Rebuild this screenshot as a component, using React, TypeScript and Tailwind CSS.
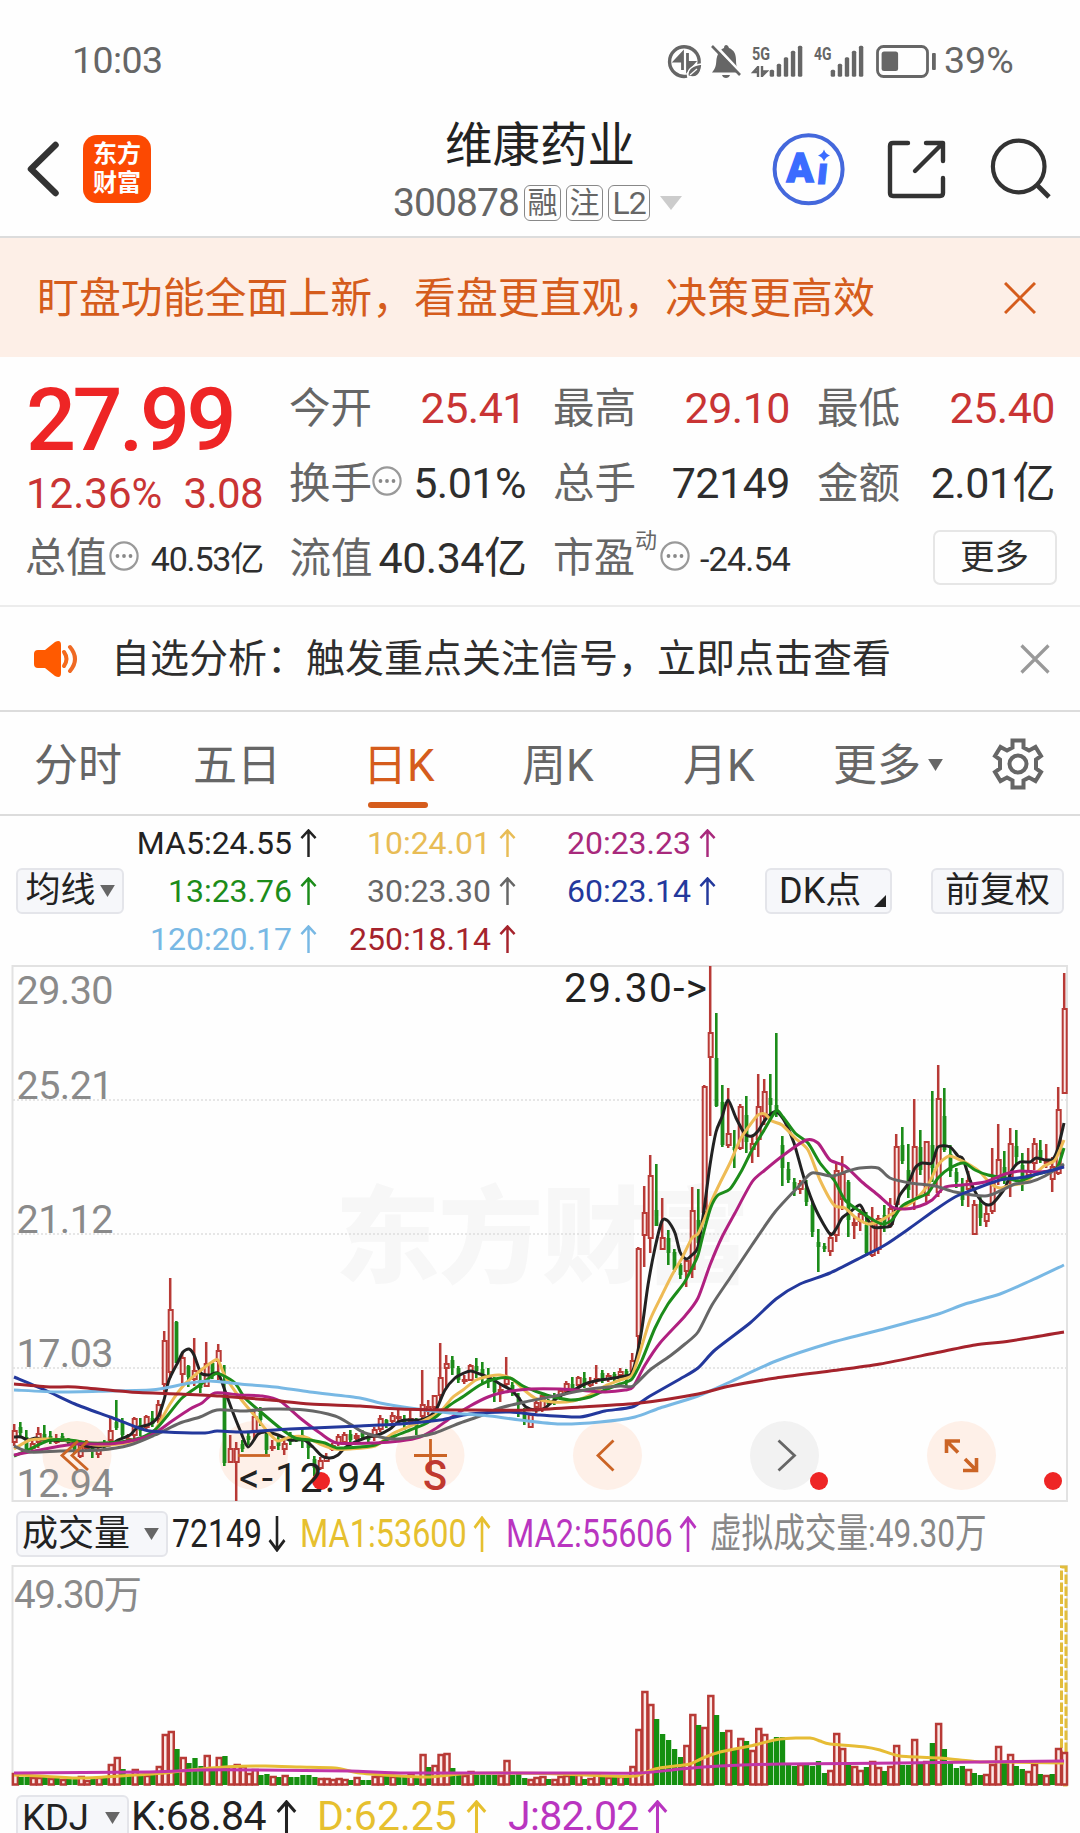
import React from "react";

type Point = [number, number];
// colour, high, body top, body bottom, low
type Candle = ["r" | "g", number, number, number, number];

const RED = "#b83a36";
const GREEN = "#1c8c1a";

const candles: Candle[] = [
  ["r", 1424, 1430, 1443, 1446], ["g", 1422, 1427, 1433, 1437], ["g", 1430, 1437, 1449, 1452], ["r", 1438, 1443, 1449, 1452],
  ["r", 1427, 1433, 1443, 1448], ["g", 1425, 1434, 1438, 1441], ["g", 1431, 1436, 1441, 1444], ["r", 1434, 1439, 1443, 1444],
  ["g", 1433, 1436, 1440, 1442], ["g", 1438, 1440, 1443, 1446], ["g", 1440, 1442, 1449, 1453], ["r", 1440, 1443, 1457, 1458],
  ["r", 1440, 1443, 1449, 1452], ["g", 1442, 1444, 1450, 1458], ["r", 1444, 1449, 1455, 1458], ["g", 1440, 1443, 1446, 1449],
  ["r", 1418, 1430, 1441, 1444], ["g", 1400, 1422, 1428, 1430], ["g", 1418, 1422, 1435, 1438], ["r", 1434, 1438, 1442, 1445],
  ["r", 1417, 1418, 1436, 1440], ["g", 1418, 1425, 1431, 1436], ["r", 1415, 1416, 1428, 1430], ["g", 1411, 1418, 1424, 1427],
  ["r", 1400, 1404, 1420, 1423], ["r", 1331, 1340, 1385, 1392], ["r", 1278, 1309, 1373, 1378], ["g", 1321, 1322, 1363, 1363],
  ["r", 1352, 1357, 1375, 1385], ["g", 1365, 1366, 1377, 1387], ["r", 1338, 1370, 1380, 1386], ["g", 1370, 1380, 1388, 1393],
  ["r", 1342, 1363, 1387, 1387], ["g", 1362, 1363, 1375, 1379], ["r", 1344, 1350, 1362, 1380], ["g", 1365, 1397, 1463, 1466],
  ["r", 1435, 1448, 1463, 1463], ["r", 1442, 1448, 1463, 1501], ["g", 1440, 1444, 1449, 1452], ["g", 1432, 1436, 1440, 1445],
  ["r", 1410, 1416, 1433, 1440], ["g", 1407, 1413, 1420, 1426], ["g", 1432, 1434, 1450, 1454], ["r", 1440, 1446, 1449, 1451],
  ["g", 1436, 1440, 1446, 1450], ["r", 1437, 1443, 1450, 1455], ["g", 1432, 1435, 1442, 1445], ["g", 1435, 1437, 1441, 1442],
  ["g", 1428, 1435, 1439, 1448], ["g", 1437, 1440, 1448, 1459], ["g", 1456, 1459, 1468, 1476], ["r", 1457, 1460, 1469, 1470],
  ["r", 1453, 1457, 1462, 1462], ["r", 1443, 1445, 1450, 1451], ["r", 1434, 1436, 1444, 1446], ["r", 1432, 1434, 1443, 1444],
  ["g", 1430, 1434, 1440, 1443], ["r", 1433, 1435, 1439, 1440], ["g", 1430, 1433, 1437, 1440], ["g", 1434, 1436, 1440, 1442],
  ["r", 1427, 1429, 1438, 1441], ["r", 1415, 1418, 1430, 1432], ["g", 1419, 1420, 1426, 1428], ["r", 1412, 1415, 1422, 1424],
  ["r", 1408, 1416, 1419, 1422], ["g", 1415, 1419, 1424, 1430], ["r", 1409, 1418, 1422, 1427], ["g", 1418, 1420, 1428, 1435],
  ["r", 1370, 1404, 1417, 1420], ["r", 1400, 1406, 1412, 1415], ["r", 1395, 1395, 1408, 1410], ["r", 1343, 1377, 1396, 1400],
  ["r", 1355, 1363, 1369, 1387], ["g", 1356, 1360, 1368, 1375], ["g", 1366, 1368, 1380, 1383], ["r", 1375, 1379, 1381, 1384],
  ["r", 1364, 1365, 1381, 1381], ["g", 1358, 1366, 1371, 1378], ["g", 1362, 1369, 1376, 1384], ["g", 1368, 1376, 1382, 1388],
  ["g", 1377, 1381, 1392, 1402], ["r", 1385, 1389, 1393, 1402], ["r", 1357, 1378, 1385, 1388], ["g", 1382, 1385, 1393, 1396],
  ["g", 1393, 1397, 1405, 1417], ["g", 1408, 1412, 1420, 1425], ["r", 1413, 1414, 1428, 1428], ["r", 1399, 1402, 1408, 1413],
  ["r", 1393, 1395, 1410, 1412], ["g", 1399, 1400, 1404, 1406], ["g", 1393, 1397, 1402, 1405], ["r", 1388, 1390, 1396, 1400],
  ["r", 1381, 1383, 1392, 1394], ["g", 1377, 1384, 1390, 1393], ["r", 1376, 1377, 1386, 1390], ["g", 1372, 1378, 1385, 1388],
  ["r", 1377, 1381, 1386, 1387], ["r", 1365, 1378, 1381, 1384], ["g", 1370, 1373, 1381, 1383], ["r", 1373, 1375, 1380, 1382],
  ["g", 1372, 1374, 1379, 1381], ["r", 1368, 1371, 1376, 1378], ["g", 1369, 1371, 1376, 1386], ["r", 1353, 1360, 1372, 1376],
  ["r", 1247, 1248, 1337, 1355], ["r", 1186, 1212, 1236, 1267], ["r", 1155, 1175, 1239, 1253], ["g", 1164, 1210, 1226, 1226],
  ["r", 1198, 1237, 1250, 1250], ["g", 1230, 1238, 1253, 1265], ["g", 1249, 1252, 1270, 1272], ["g", 1263, 1265, 1275, 1279],
  ["r", 1258, 1260, 1272, 1287], ["r", 1187, 1210, 1270, 1278], ["g", 1189, 1220, 1243, 1250], ["r", 1085, 1086, 1213, 1215],
  ["r", 966, 1032, 1058, 1136], ["g", 1013, 1058, 1106, 1107], ["g", 1085, 1102, 1145, 1147], ["r", 1088, 1133, 1146, 1148],
  ["g", 1130, 1147, 1150, 1168], ["r", 1104, 1106, 1149, 1150], ["g", 1096, 1115, 1142, 1153], ["r", 1137, 1143, 1150, 1163],
  ["r", 1074, 1106, 1140, 1157], ["r", 1079, 1091, 1117, 1125], ["g", 1074, 1098, 1105, 1117], ["g", 1033, 1105, 1112, 1117],
  ["g", 1136, 1145, 1168, 1186], ["g", 1162, 1169, 1180, 1183], ["g", 1178, 1182, 1190, 1196], ["r", 1180, 1183, 1190, 1194],
  ["g", 1180, 1188, 1202, 1206], ["g", 1202, 1205, 1232, 1237], ["g", 1229, 1242, 1247, 1272], ["g", 1243, 1246, 1249, 1252],
  ["r", 1232, 1237, 1252, 1256], ["r", 1164, 1170, 1236, 1242], ["r", 1156, 1173, 1200, 1210], ["g", 1180, 1182, 1220, 1237],
  ["r", 1216, 1222, 1226, 1239], ["r", 1209, 1213, 1222, 1231], ["g", 1212, 1225, 1253, 1256], ["r", 1207, 1222, 1256, 1257],
  ["r", 1215, 1218, 1250, 1254], ["g", 1205, 1215, 1225, 1232], ["r", 1198, 1208, 1225, 1228], ["r", 1134, 1146, 1205, 1210],
  ["g", 1127, 1145, 1161, 1164], ["g", 1144, 1170, 1190, 1198], ["r", 1099, 1146, 1200, 1210], ["g", 1130, 1147, 1170, 1175],
  ["r", 1141, 1141, 1196, 1202], ["g", 1091, 1145, 1168, 1182], ["r", 1065, 1098, 1193, 1197], ["g", 1088, 1116, 1150, 1152],
  ["g", 1145, 1154, 1171, 1177], ["g", 1168, 1172, 1182, 1188], ["g", 1178, 1186, 1200, 1206], ["r", 1171, 1180, 1190, 1207],
  ["r", 1200, 1204, 1235, 1235], ["g", 1196, 1204, 1218, 1226], ["r", 1204, 1213, 1222, 1227], ["r", 1148, 1183, 1212, 1214],
  ["r", 1124, 1159, 1178, 1185], ["g", 1151, 1167, 1178, 1184], ["r", 1128, 1143, 1178, 1197], ["g", 1130, 1146, 1157, 1165],
  ["g", 1153, 1165, 1180, 1191], ["r", 1148, 1170, 1176, 1180], ["r", 1138, 1143, 1164, 1170], ["g", 1140, 1150, 1160, 1163],
  ["r", 1144, 1160, 1164, 1168], ["r", 1157, 1166, 1180, 1192], ["r", 1087, 1109, 1174, 1175], ["r", 973, 1008, 1094, 1094],
];

const volumes =
  "r12 g8 g8 r8 r8 g8 r7 g8 r6 g8 g7 r9 r5 g7 r8 g8 r21 r28 g16 g10 r16 g11 r10 g12 r19 r51 r54 g36 r28 g22 g27 g19 r30 g17 r28 g29 r19 r21 r19 r12 r16 g10 g11 r9 g8 r10 g8 g8 g10 g10 g8 r7 r7 r6 r7 r6 g5 r8 g5 g5 r9 r10 g9 r9 g9 g8 r12 g8 r31 g18 r20 r31 r32 g17 g12 r10 r14 g10 g10 g10 g10 r10 r25 g10 g11 g7 r6 r8 r9 g6 r6 r9 r10 g10 r11 g6 r7 r11 g8 r8 g9 r9 g9 r19 r56 r94 r81 g66 g51 g45 g36 g28 r40 r71 g60 r58 r90 g70 g53 r55 g37 r47 g44 r35 r57 r51 g45 g48 g48 g20 g19 r21 g20 g19 g24 g12 r15 r52 r37 g21 r19 r15 g18 r24 r18 g14 r19 r40 g20 g20 r46 g22 r24 g42 r62 g36 g22 g17 g19 r16 g12 g10 r11 r21 r39 g22 r31 g19 g16 r14 r21 g11 r10 g11 r37 r33".split(" ");

const averages: { color: string; points: Point[] }[] = [
  {
    color: "#222222",
    points: [[14,1437],[21,1437],[28,1440],[36,1438],[45,1440],[70,1441],[90,1447],[110,1445],[118,1440],[130,1435],[137,1428],[150,1424],[158,1417],[164,1400],[169,1380],[178,1362],[183,1352],[189,1349],[194,1355],[201,1373],[210,1375],[218,1373],[224,1388],[232,1410],[240,1430],[248,1447],[258,1434],[266,1432],[278,1435],[290,1440],[304,1440],[313,1447],[322,1456],[330,1458],[338,1455],[346,1447],[365,1438],[378,1435],[390,1429],[398,1422],[405,1420],[420,1420],[430,1416],[437,1408],[445,1390],[455,1378],[464,1373],[471,1371],[480,1374],[490,1378],[500,1384],[511,1390],[518,1397],[526,1407],[536,1410],[545,1408],[552,1402],[562,1395],[572,1391],[585,1384],[600,1380],[614,1378],[625,1376],[631,1374],[636,1360],[642,1328],[648,1285],[655,1248],[662,1221],[668,1221],[675,1233],[680,1252],[686,1259],[692,1255],[698,1247],[704,1210],[710,1165],[716,1132],[722,1117],[728,1100],[736,1118],[745,1134],[752,1136],[758,1131],[765,1120],[772,1113],[777,1112],[785,1122],[794,1143],[804,1178],[816,1210],[830,1234],[836,1229],[842,1218],[850,1212],[860,1205],[866,1216],[873,1227],[885,1227],[892,1224],[899,1197],[908,1184],[915,1168],[922,1163],[932,1163],[938,1147],[950,1147],[958,1156],[963,1159],[970,1180],[977,1195],[985,1204],[992,1204],[1000,1195],[1006,1186],[1012,1170],[1020,1162],[1030,1162],[1036,1158],[1046,1160],[1053,1159],[1058,1148],[1064,1123]],
  },
  {
    color: "#eebb55",
    points: [[14,1449],[30,1440],[48,1439],[75,1441],[95,1445],[120,1444],[140,1439],[155,1430],[170,1404],[184,1385],[200,1371],[212,1362],[218,1360],[225,1376],[240,1398],[255,1416],[268,1432],[278,1441],[290,1437],[305,1437],[320,1444],[335,1449],[350,1449],[375,1446],[392,1434],[410,1426],[425,1420],[440,1412],[452,1398],[463,1390],[476,1380],[490,1376],[500,1375],[512,1379],[523,1389],[535,1398],[552,1402],[573,1401],[590,1395],[605,1386],[620,1380],[632,1375],[640,1352],[650,1320],[662,1295],[672,1275],[682,1258],[692,1238],[698,1234],[704,1220],[712,1200],[720,1183],[730,1163],[740,1140],[750,1125],[758,1115],[765,1114],[772,1121],[782,1125],[795,1138],[808,1150],[820,1180],[834,1205],[845,1208],[855,1217],[868,1224],[880,1221],[890,1215],[903,1208],[915,1200],[928,1185],[938,1165],[949,1156],[960,1160],[970,1165],[980,1172],[990,1183],[1000,1188],[1012,1185],[1024,1183],[1036,1173],[1044,1166],[1055,1160],[1064,1140]],
  },
  {
    color: "#1c8c1a",
    points: [[14,1456],[30,1449],[50,1440],[70,1440],[90,1443],[120,1442],[140,1438],[155,1430],[168,1415],[182,1398],[200,1385],[215,1374],[222,1375],[235,1383],[245,1398],[262,1413],[280,1428],[295,1438],[310,1440],[325,1443],[337,1448],[360,1447],[375,1445],[395,1436],[410,1430],[425,1424],[437,1416],[450,1405],[464,1396],[480,1385],[495,1379],[510,1378],[523,1386],[535,1391],[550,1396],[570,1400],[590,1397],[605,1390],[620,1384],[632,1379],[642,1360],[655,1328],[668,1304],[684,1283],[692,1268],[698,1255],[704,1231],[711,1207],[718,1195],[730,1189],[742,1170],[752,1150],[763,1132],[776,1111],[783,1117],[795,1133],[808,1143],[820,1163],[834,1180],[845,1200],[858,1210],[870,1218],[882,1224],[892,1220],[902,1206],[915,1199],[928,1193],[938,1178],[950,1168],[964,1163],[975,1170],[988,1175],[1005,1178],[1020,1181],[1032,1176],[1045,1172],[1057,1168],[1064,1148]],
  },
  {
    color: "#b02080",
    points: [[14,1455],[45,1449],[75,1444],[110,1444],[135,1440],[155,1433],[172,1421],[190,1409],[202,1403],[215,1393],[240,1395],[262,1396],[280,1401],[300,1418],[320,1433],[337,1443],[375,1443],[400,1441],[420,1437],[435,1429],[452,1417],[470,1406],[488,1397],[505,1392],[530,1389],[560,1389],[590,1391],[605,1392],[625,1390],[633,1387],[645,1365],[660,1343],[685,1316],[698,1298],[710,1265],[722,1237],[735,1213],[752,1182],[765,1170],[785,1154],[806,1140],[818,1143],[830,1160],[845,1166],[862,1182],[878,1195],[892,1207],[905,1209],[920,1206],[932,1200],[945,1187],[962,1185],[985,1182],[1005,1174],[1020,1171],[1040,1172],[1055,1170],[1064,1166]],
  },
  {
    color: "#666666",
    points: [[14,1446],[30,1452],[60,1451],[100,1450],[130,1445],[155,1435],[180,1423],[200,1417],[217,1410],[245,1411],[270,1409],[305,1410],[335,1416],[350,1424],[365,1433],[392,1439],[415,1437],[435,1433],[460,1423],[480,1416],[500,1408],[525,1402],[560,1395],[590,1389],[620,1386],[633,1386],[650,1370],[670,1356],[685,1344],[698,1332],[712,1305],[730,1278],[752,1245],[775,1212],[800,1185],[812,1173],[832,1176],[848,1171],[860,1168],[878,1168],[890,1178],[910,1183],[935,1186],[955,1192],[985,1196],[1000,1191],[1015,1184],[1030,1182],[1045,1176],[1064,1164]],
  },
  {
    color: "#23389c",
    points: [[14,1377],[45,1390],[75,1404],[110,1417],[145,1430],[165,1432],[205,1433],[217,1431],[245,1432],[290,1429],[360,1426],[400,1424],[440,1420],[470,1414],[510,1412],[540,1415],[580,1417],[605,1411],[632,1407],[650,1396],[680,1379],[698,1368],[715,1350],[750,1323],[776,1299],[800,1284],[830,1273],[860,1258],[885,1245],[910,1228],[935,1210],[955,1197],[975,1189],[1000,1180],[1025,1177],[1064,1167]],
  },
  {
    color: "#78b8e4",
    points: [[14,1390],[60,1392],[110,1391],[150,1390],[165,1388],[190,1383],[210,1381],[240,1384],[275,1387],[310,1392],[360,1398],[380,1403],[410,1408],[450,1413],[490,1416],[520,1420],[560,1424],[600,1422],[635,1417],[660,1408],[698,1396],[730,1382],[776,1361],[830,1343],[880,1330],[935,1315],[965,1304],[1000,1294],[1030,1281],[1064,1265]],
  },
  {
    color: "#a5232c",
    points: [[14,1384],[50,1387],[75,1387],[130,1392],[180,1394],[220,1396],[270,1400],[310,1404],[360,1406],[400,1409],[470,1410],[530,1410],[580,1407],[640,1403],[698,1394],[730,1386],[776,1378],[830,1371],[880,1364],[935,1353],[975,1345],[1010,1341],[1064,1332]],
  },
];

const volumeAverages: { color: string; points: Point[] }[] = [
  {
    color: "#e6bc35",
    points: [[14,1775],[40,1776],[80,1778],[120,1776],[165,1773],[190,1770],[225,1767],[265,1766],[300,1767],[335,1768],[360,1773],[400,1776],[430,1777],[460,1774],[500,1773],[560,1774],[610,1776],[635,1776],[655,1769],[675,1766],[690,1764],[703,1758],[720,1752],[750,1746],[780,1739],[810,1738],[820,1741],[830,1744],[865,1747],[880,1750],[900,1756],[940,1758],[960,1760],[980,1762],[1000,1762],[1064,1763]],
  },
  {
    color: "#c135a8",
    points: [[14,1773],[150,1772],[200,1770],[260,1770],[350,1771],[400,1773],[560,1773],[640,1773],[680,1769],[720,1766],[780,1764],[900,1763],[1064,1761]],
  },
];

// Catmull-Rom through the points
const smooth = (p: Point[]) => {
  let d = `M${p[0][0]} ${p[0][1]}`;
  for (let i = 0; i < p.length - 1; i++) {
    const a = p[Math.max(i - 1, 0)];
    const b = p[i];
    const c = p[i + 1];
    const e = p[Math.min(i + 2, p.length - 1)];
    d += `C${b[0] + (c[0] - a[0]) / 8} ${b[1] + (c[1] - a[1]) / 8} ${c[0] - (e[0] - b[0]) / 8} ${c[1] - (e[1] - b[1]) / 8} ${c[0]} ${c[1]}`;
  }
  return d;
};

const Arrow = ({ down = false, className = "w-[18px] h-[29px]" }: { down?: boolean; className?: string }) => (
  <svg viewBox="0 0 18 29" preserveAspectRatio="none" className={className} fill="none" stroke="currentColor" strokeWidth="2.6">
    <path d={down ? "M9 0V28M1.5 19.5L9 27.5L16.5 19.5" : "M9 29V1.5M1.5 9.5L9 1.5L16.5 9.5"} />
  </svg>
);

const Triangle = ({ className = "text-[#666]" }: { className?: string }) => (
  <svg viewBox="0 0 16 13" className={`w-[15px] h-[12px] ${className}`}>
    <path d="M0 0H16L8 13Z" fill="currentColor" />
  </svg>
);

const Dots = () => (
  <svg viewBox="0 0 30 30" className="w-[30px] h-[30px] shrink-0 -mt-[6px]">
    <circle cx="15" cy="15" r="13.6" fill="none" stroke="#999" strokeWidth="2.2" />
    <circle cx="8.5" cy="15" r="1.9" fill="#888" />
    <circle cx="15" cy="15" r="1.9" fill="#888" />
    <circle cx="21.5" cy="15" r="1.9" fill="#888" />
  </svg>
);

const StatusBar = () => {
  const bars = [7, 13, 19.5, 26, 31];
  return (
    <div className="flex items-center h-[122px] pl-[72px] text-[#666]">
      <span className="text-[37.5px] tracking-[-0.6px] w-[592px]">10:03</span>
      <svg viewBox="664 39 277 44" className="w-[277px] h-[44px]" fill="none">
        <path d="M698.5 66A14.8 14.8 0 1 0 687 76.200" stroke="#666" strokeWidth="3.400" />
        <path d="M682.500 70V53L675 61H682.500" stroke="#666" strokeWidth="2.800" fill="#666" />
        <path d="M687.500 53V70L694 62.500H687.500" stroke="#666" strokeWidth="2.800" fill="#666" />
        <path d="M702 64C693 65 687 69 688 76C696 79 701 75 702 64Z" fill="#666" stroke="#fff" strokeWidth="1.400" />
        <path d="M690 75L697 69" stroke="#fff" strokeWidth="1.200" />
        <path d="M712 72.500C716 68 716 65 716.500 59C718 52 721 49 724 48C724 44 728 44 729 48C734 50 736 54 736 60C736 66 737 69 741 72.500ZM722 75H730C729 79 723 79 722 75Z" fill="#666" />
        <path d="M714 44L742 74" stroke="#fefefe" strokeWidth="3" />
        <path d="M712 46L740 75" stroke="#666" strokeWidth="2.600" />
        <text x="752" y="59.500" fontSize="18" fontWeight="700" fill="#666" textLength="18" lengthAdjust="spacingAndGlyphs">5G</text>
        <text x="814" y="59.500" fontSize="18" fontWeight="700" fill="#666" textLength="17.500" lengthAdjust="spacingAndGlyphs">4G</text>
        <path d="M758 66V77M758 67L753.500 72H758M762 77V66M762 76L766.500 71.500H762" stroke="#666" strokeWidth="2.400" />
        {bars.map((h, i) => (
          <g key={h} fill="#666">
            <rect x={769.7 + i * 7.05} y={76.8 - h} width="4.400" height={h} rx="1.500" />
            <rect x={830.7 + i * 7.05} y={76.8 - h} width="4.400" height={h} rx="1.500" />
          </g>
        ))}
        <rect x="877.500" y="46.500" width="50" height="30" rx="6" stroke="#666" strokeWidth="2.800" />
        <rect x="881.600" y="51.500" width="16.500" height="19.500" rx="2.500" fill="#666" />
        <rect x="932" y="53" width="3.800" height="17" rx="1" fill="#666" />
      </svg>
      <span className="text-[37.5px] ml-[3px]">39%</span>
    </div>
  );
};

const Header = () => (
  <div className="flex h-[116px] border-b-2 border-[#dcdcdc]">
    <div className="flex w-[392px] pl-[26px] pt-[13px]">
      <svg viewBox="0 0 34 68" className="w-[34px] h-[68px]" fill="none" stroke="#333" strokeWidth="6.500" strokeLinecap="round" strokeLinejoin="round">
        <path d="M29.500 10L5 34L29.500 58" />
      </svg>
      <div className="ml-[23px] w-[68px] h-[68px] rounded-[14px] bg-[#fc4902] text-white font-bold text-[24px] leading-[29px] flex flex-col items-center justify-center">
        <span>东方</span>
        <span>财富</span>
      </div>
    </div>
    <div className="w-[296px] flex flex-col items-center pt-[1px]">
      <h1 className="text-[47.500px] leading-none text-[#222] whitespace-nowrap">维康药业</h1>
      <div className="flex items-center h-[36px] mt-[14px] text-[#666] w-full">
        <span className="text-[39px] tracking-[-0.900px] w-[132px] pl-[1px] pt-[2px]">300878</span>
        <span className="w-[37px] h-[36px] rounded-[6px] border border-[#888] text-[30px] flex items-center justify-center">融</span>
        <span className="ml-[5px] w-[37px] h-[36px] rounded-[6px] border border-[#888] text-[30px] flex items-center justify-center">注</span>
        <span className="ml-[5px] w-[42px] h-[36px] rounded-[6px] border border-[#888] text-[32px] tracking-[-1px] flex items-center justify-center">L2</span>
        <svg viewBox="0 0 22 14" className="w-[22px] h-[14px] ml-[10px] shrink-0">
          <path d="M0 0H22L11 14Z" fill="#ccc" />
        </svg>
      </div>
    </div>
    <svg viewBox="770 130 290 78" className="w-[290px] h-[78px] ml-[82px] mt-[8px]" fill="none">
      <circle cx="808.600" cy="169.300" r="34" stroke="#4468dc" strokeWidth="4" />
      <text x="786.500" y="182" fontSize="41" fontWeight="900" fill="#3b6cff" stroke="#3b6cff" strokeWidth="1.500" textLength="27" lengthAdjust="spacingAndGlyphs">A</text>
      <text x="0" y="0" fontSize="38" fontWeight="900" fill="#3b6cff" stroke="#3b6cff" strokeWidth="1" transform="translate(816 184) skewX(-6)">ı</text>
      <path d="M824 149.500Q825.500 154 830 155.500Q825.500 157 824 161.500Q822.500 157 818 155.500Q822.500 154 824 149.500Z" fill="#3b6cff" />
      <g stroke="#333" strokeWidth="4.400" strokeLinecap="round" strokeLinejoin="round">
        <path d="M908 143H893Q890 143 890 146V193Q890 196 893 196H940Q943 196 943 193V178" />
        <path d="M926 143H943V161M943 143L915 171" />
      </g>
      <circle cx="1018.700" cy="166.500" r="25.800" stroke="#333" strokeWidth="4.200" />
      <path d="M1037 185L1049 197" stroke="#333" strokeWidth="4.800" strokeLinecap="butt" />
    </svg>
  </div>
);

const Banner = () => (
  <div className="flex items-center justify-between h-[119px] pl-[37px] pr-[44px] bg-[#fdefe7] text-[#d55c1c]">
    <span className="text-[41.900px] whitespace-nowrap pt-[3px]">盯盘功能全面上新，看盘更直观，决策更高效</span>
    <svg viewBox="0 0 32 32" className="w-[32px] h-[32px]" stroke="currentColor" strokeWidth="3">
      <path d="M1 1L31 31M31 1L1 31" />
    </svg>
  </div>
);

const Cell = ({ label, value, red, dots }: { label: string; value: string; red?: boolean; dots?: boolean }) => (
  <div className="flex items-center justify-between">
    <span className="flex items-center text-[#666] text-[41.500px]">
      {label}
      {dots && <Dots />}
    </span>
    <span className={red ? "text-[#c93434] text-[43px] -tracking-[0.500px]" : "text-[#2e2e2e] text-[43px] -tracking-[0.500px]"}>{value}</span>
  </div>
);

const Quote = () => (
  <div className="h-[250px] border-b-2 border-[#ececec] px-[26px] pt-[14px] text-[#2e2e2e]">
    <div className="flex gap-[26px]">
      <div className="w-[237px] h-[150px] shrink-0">
        <div className="text-[88px] font-medium tracking-[-3.500px] text-[#ee2525] h-[90px] leading-[97px]">27.99</div>
        <div className="flex justify-between text-[42px] text-[#c93434] h-[56px] items-center pt-[9px]">
          <span>12.36%</span>
          <span className="tracking-[-0.600px]">3.08</span>
        </div>
      </div>
      <div className="grid grid-cols-[237px_237px_238px] grid-rows-[75px_75px] gap-x-[27px]">
        <Cell label="今开" value="25.41" red />
        <Cell label="最高" value="29.10" red />
        <Cell label="最低" value="25.40" red />
        <Cell label="换手" value="5.01%" dots />
        <Cell label="总手" value="72149" />
        <Cell label="金额" value="2.01亿" />
      </div>
    </div>
    <div className="grid grid-cols-[237px_237px_237px_238px] gap-x-[26.500px] h-[75px] items-center">
      <div className="flex items-center justify-between">
        <span className="flex items-center text-[#666] text-[41px] -ml-[1px]">总值<span className="w-[2px]" /><Dots /></span>
        <span className="text-[34px] tracking-[-1.200px]">40.53亿</span>
      </div>
      <Cell label="流值" value="40.34亿" />
      <div className="flex items-center justify-between">
        <span className="flex items-center text-[#666] text-[41px]">
          市盈
          <span className="text-[22px] -mt-[36px] mr-[3px]">动</span>
          <Dots />
        </span>
        <span className="text-[34px] tracking-[-0.800px]">-24.54</span>
      </div>
      <div className="flex justify-end -mr-[2px] -mt-[3px]">
        <span className="flex items-center justify-center w-[124px] h-[55px] border-2 border-[#e6e6e6] rounded-[7px] text-[34.500px]">更多</span>
      </div>
    </div>
  </div>
);

const Notice = () => (
  <div className="flex items-center h-[105px] pl-[33px] pr-[30px] border-b-2 border-[#dcdcdc] text-[#2e2e2e]">
    <svg viewBox="0 0 46 38" className="w-[46px] h-[38px]" fill="none">
      <path d="M5 10H12L22 2Q28 -1 28 5V33Q28 39 22 36L12 28H5Q1 28 1 24V14Q1 10 5 10Z" fill="#ff5a00" />
      <path d="M31 12Q36 19 31 26" stroke="#f56a1c" strokeWidth="4" strokeLinecap="round" />
      <path d="M37 7Q47 19 37 31" stroke="#ef6a24" strokeWidth="4" strokeLinecap="round" />
    </svg>
    <span className="ml-[32px] text-[39px] whitespace-nowrap pt-[1px]">自选分析：触发重点关注信号，立即点击查看</span>
    <svg viewBox="0 0 30 30" className="w-[30px] h-[30px] ml-auto" stroke="#999" strokeWidth="3.200">
      <path d="M1.500 1.500L28.500 28.500M28.500 1.500L1.500 28.500" />
    </svg>
  </div>
);

const Tabs = () => (
  <div className="grid grid-cols-[159px_170px_159px_161px_150px_160px_60px] h-[104px] pl-[34px] pt-[1px] border-b-2 border-[#dcdcdc] text-[44px] text-[#666] items-center">
    <span className="pt-[4px]">分时</span>
    <span className="pt-[4px]">五日</span>
    <span className="pt-[4px] text-[#d55c1c] relative">
      日K
      <span className="absolute left-[5px] top-[62px] w-[60px] h-[6px] rounded-full bg-[#d55c1c]" />
    </span>
    <span className="pt-[4px]">周K</span>
    <span className="pt-[4px]">月K</span>
    <span className="flex items-center pt-[4px]">
      更多
      <Triangle className="ml-[7px] -mt-[2px]" />
    </span>
    <svg viewBox="0 0 52 52" className="w-[52px] h-[52px] -ml-[1px]" fill="none" stroke="#666" strokeWidth="4">
      <path d="M20.500 2.500H31.500V9.500L37 12.500L43.500 9L49 18L44 21.500V30.500L49 34L43.500 43L37 39.500L31.500 42.500V49.500H20.500V42.500L15 39.500L8.500 43L3 34L8 30.500V21.500L3 18L8.500 9L15 12.500L20.500 9.500Z" />
      <circle cx="26" cy="26" r="8.500" />
    </svg>
  </div>
);

const legend = [
  ["MA5:24.55", "text-[#222]"],
  ["10:24.01", "text-[#e8bc55]"],
  ["20:23.23", "text-[#a8297c]"],
  ["13:23.76", "text-[#1c8c1a]"],
  ["30:23.30", "text-[#666]"],
  ["60:23.14", "text-[#23389c]"],
  ["120:20.17", "text-[#78b8e4]"],
  ["250:18.14", "text-[#a5232c]"],
];

const Legend = () => (
  <div className="flex items-center h-[149px] pl-[16px] text-[#222] text-[35px]">
    <span className="flex items-center justify-center gap-[4px] w-[108px] h-[46px] rounded-[6px] border-2 border-[#e4e5ea] bg-[#f6f7fa]">
      均线
      <Triangle />
    </span>
    <div className="grid grid-cols-[193px_199px_200px] grid-rows-[48px_48px_48px] text-[32px] w-[641px]">
      {legend.map(([text, color]) => (
        <span key={text} className={`flex items-center justify-end gap-[8px] ${color}`}>
          {text}
          <Arrow className="w-[17px] h-[28px]" />
        </span>
      ))}
    </div>
    <span className="relative flex items-center w-[127px] h-[46px] pl-[12px] rounded-[6px] border-2 border-[#e4e5ea] bg-[#f6f7fa] text-[36px]">
      DK点
      <svg viewBox="0 0 12 12" className="absolute right-[4px] bottom-[5px] w-[12px] h-[12px]">
        <path d="M12 0V12H0Z" fill="#222" />
      </svg>
    </span>
    <span className="flex items-center justify-center ml-[39px] w-[133px] h-[46px] rounded-[6px] border-2 border-[#e4e5ea] bg-[#f6f7fa]">
      前复权
    </span>
  </div>
);

const prices: [string, number][] = [
  ["29.30", 1004],
  ["25.21", 1099],
  ["21.12", 1233],
  ["17.03", 1367],
  ["12.94", 1497],
];

const PriceChart = () => (
  <svg viewBox="0 965 1080 537" className="block w-[1080px] h-[537px] overflow-visible" fill="none">
    <text x="335" y="1274" fontSize="105" fontWeight="900" fill="#f7f7f7" textLength="415">东方财富</text>
    <rect x="12.500" y="966" width="1054.500" height="535" stroke="#e2e2e2" strokeWidth="2" />
    {[1100, 1234, 1368].map((y) => (
      <path key={y} d={`M13 ${y}H1066`} stroke="#dedede" strokeWidth="1.500" strokeDasharray="2 2" />
    ))}
    {[77, 253.5, 430, 607.5, 784.5, 961.5].map((x) => (
      <circle key={x} cx={x} cy="1455.500" r="34.500" fill={x === 784.5 ? "#f2f2f2" : "#fef0e8"} />
    ))}
    {prices.map(([label, y]) => (
      <text key={label} x="16.500" y={y} fontSize="39.500" fill="#8a8a8a" textLength="97">{label}</text>
    ))}
    {candles.map(([kind, high, top, bottom, low], i) => {
      const x = 14.2 + i * 6;
      if (kind === "g") {
        return (
          <g key={i} fill={GREEN}>
            <rect x={x - 1.2} y={high} width="2.600" height={low - high} />
            <rect x={x - 1.6} y={top} width="3.800" height={bottom - top} />
          </g>
        );
      }
      return (
        <g key={i} stroke={RED} strokeWidth="2.500">
          <path d={`M${x} ${high}V${top}M${x} ${bottom}V${low}`} />
          <rect x={x - 1.5} y={top + 1} width="4" height={Math.max(bottom - top - 2, 1)} fill="#fbe9e7" strokeWidth="2" />
        </g>
      );
    })}
    {averages.map(({ color, points }) => (
      <path key={color} d={smooth(points)} stroke={color} strokeWidth="3" strokeLinejoin="round" />
    ))}
    <g stroke="#cb6425" strokeWidth="2.800">
      <path d="M78 1441L62 1455.500L78 1470M88 1441L72 1455.500L88 1470" />
      <path d="M238 1455.500H270" />
      <path d="M414 1455.500H447M430.500 1439V1472" />
      <path d="M613.500 1440.500L598 1455.500L613.500 1470.500" />
      <path d="M946.500 1453V1441H960M946.500 1441L958 1452.500M976.500 1458V1470.500H963M976.500 1470.500L965 1459" strokeWidth="3.600" />
    </g>
    <path d="M778.500 1440.500L794.500 1455.500L778.500 1470.500" stroke="#666" strokeWidth="2.800" />
    <text x="564" y="1002" fontSize="40.500" fill="#222" textLength="143">29.30-&gt;</text>
    <circle cx="321" cy="1481" r="9" fill="#ee2525" />
    <text x="239" y="1492" fontSize="40.500" fill="#222" textLength="146">&lt;-12.94</text>
    <text x="423" y="1489.500" fontSize="42" fontWeight="500" fill="#c0392f" textLength="24" lengthAdjust="spacingAndGlyphs">S</text>
    <circle cx="819" cy="1481" r="9" fill="#ee2525" />
    <circle cx="1053" cy="1481" r="9" fill="#ee2525" />
  </svg>
);

const VolumeHeader = () => (
  <div className="flex items-center h-[63px] pl-[16px] text-[#222] text-[39.500px] whitespace-nowrap">
    <span className="flex items-center justify-between w-[152px] h-[46px] pl-[4px] pr-[7px] rounded-[6px] border-2 border-[#e4e5ea] bg-[#f6f7fa] text-[36px]">
      成交量
      <Triangle />
    </span>
    <span className="w-[94px] ml-[4px]">
      <span className="inline-block origin-left scale-x-[0.81]">72149</span>
    </span>
    <Arrow down className="w-[18px] h-[36px] ml-[2px]" />
    <span className="flex items-center text-[#e6c02f]">
      <span className="w-[173px] ml-[14px]">
        <span className="inline-block origin-left scale-x-[0.82]">MA1:53600</span>
      </span>
      <Arrow className="w-[18px] h-[36px]" />
    </span>
    <span className="flex items-center text-[#b935c0]">
      <span className="w-[173px] ml-[15px]">
        <span className="inline-block origin-left scale-x-[0.82]">MA2:55606</span>
      </span>
      <Arrow className="w-[18px] h-[36px]" />
    </span>
    <span className="ml-[13px] w-[280px] text-[#888]">
      <span className="inline-block origin-left scale-x-80">虚拟成交量:49.30万</span>
    </span>
  </div>
);

const VolumeChart = () => (
  <svg viewBox="0 1565 1080 222" className="block w-[1080px] h-[222px] overflow-visible" fill="none">
    <path d="M12.500 1786V1566H1067V1786" stroke="#e2e2e2" strokeWidth="2" />
    <text x="14" y="1607.500" fontSize="38.500" fill="#8a8a8a" textLength="128">49.30万</text>
    <rect x="1061.500" y="1567" width="4.500" height="218" stroke="#e2bd3c" strokeWidth="3" strokeDasharray="9.500 2.500" />
    {volumes.map((v, i) => {
      const h = Number(v.slice(1));
      const x = 12.3 + i * 5.995;
      return v[0] === "g" ? (
        <rect key={i} x={x + 0.2} y={1785 - h} width="5.300" height={h} fill="#159010" />
      ) : (
        <rect key={i} x={x + 0.6} y={1786 - h} width="5" height={h - 1.5} stroke={RED} strokeWidth="2.500" fill="#fbe9e7" />
      );
    })}
    {volumeAverages.map(({ color, points }) => (
      <path key={color} d={smooth(points)} stroke={color} strokeWidth="3" />
    ))}
  </svg>
);

const KdjHeader = () => (
  <div className="flex items-start h-[46px] pl-[16px] pt-[8px] text-[#222] text-[41px] whitespace-nowrap overflow-hidden">
    <span className="flex items-center justify-between shrink-0 w-[113px] h-[46px] pl-[4px] pr-[7px] rounded-[6px] border-2 border-[#e4e5ea] bg-[#f6f7fa] text-[36.500px]">
      KDJ
      <Triangle />
    </span>
    <span className="flex items-center h-[42px] ml-[2px] pt-[1px]">
      <span className="w-[145px] tracking-[-0.500px]">K:68.84</span>
      <Arrow className="w-[21px] h-[36px] mt-[3px]" />
    </span>
    <span className="flex items-center h-[42px] ml-[20px] pt-[1px] text-[#e6c02f]">
      <span className="w-[149px]">D:62.25</span>
      <Arrow className="w-[21px] h-[36px] mt-[3px]" />
    </span>
    <span className="flex items-center h-[42px] ml-[21px] pt-[1px] text-[#b935c0]">
      <span className="w-[139px] tracking-[-0.700px]">J:82.02</span>
      <Arrow className="w-[21px] h-[36px] mt-[3px]" />
    </span>
  </div>
);

const App: React.FC = () => {
  return (
    <div className="w-[1080px] h-[1833px] overflow-hidden bg-[#fefefe] leading-none font-['Roboto','Noto_Sans_CJK_SC',sans-serif]">
      <StatusBar />
      <Header />
      <Banner />
      <Quote />
      <Notice />
      <Tabs />
      <Legend />
      <PriceChart />
      <VolumeHeader />
      <VolumeChart />
      <KdjHeader />
    </div>
  );
};

export default App;
